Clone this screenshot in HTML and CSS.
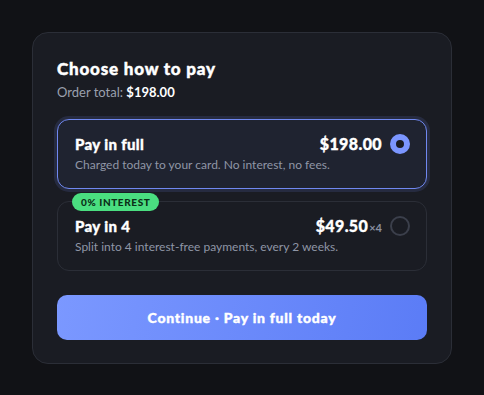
FILE: index.html
```html
<!DOCTYPE html>
<html>
<head>
<meta charset="utf-8">
<link rel="stylesheet" href="styles.css">
</head>
<body>
<div class="card">
  <h1 class="title">Choose how to pay</h1>
  <p class="total">Order total: <strong>$198.00</strong></p>
  <div class="options">
    <div class="option selected">
      <div class="opt-row">
        <span class="opt-name">Pay in full</span>
        <span class="opt-right">
          <span class="opt-price">$198.00</span>
          <span class="radio on"></span>
        </span>
      </div>
      <div class="opt-desc">Charged today to your card. No interest, no fees.</div>
    </div>
    <div class="option">
      <span class="badge">0% INTEREST</span>
      <div class="opt-row">
        <span class="opt-name">Pay in 4</span>
        <span class="opt-right">
          <span class="opt-price">$49.50<span class="times">×4</span></span>
          <span class="radio"></span>
        </span>
      </div>
      <div class="opt-desc">Split into 4 interest-free payments, every 2 weeks.</div>
    </div>
  </div>
  <button class="cta">Continue · Pay in full today</button>
</div>
</body>
</html>
```
FILE: styles.css
```css
* { box-sizing: border-box; }
html, body { margin: 0; padding: 0; }
body {
  background: #111216;
  font-family: Lato, "Noto Sans", sans-serif;
  color: #e8eaf0;
  padding: 32px;
  width: 484px;
  height: 395px;
}
.card {
  width: 420px;
  background: #1a1c23;
  border: 1px solid #2b2e37;
  border-radius: 16px;
  padding: 24px 24px 23px;
}
.title {
  margin: 0;
  font-size: 17px;
  font-weight: 900;
  color: #ffffff;
  line-height: 24px;
  letter-spacing: 0.8px;
  -webkit-text-stroke: 0.45px #ffffff;
}
.total {
  margin: 2px 0 0;
  font-size: 13px;
  color: #9aa0ae;
  line-height: 18px;
}
.total strong { color: #ffffff; font-weight: 700; }
.options {
  margin-top: 18px;
  display: flex;
  flex-direction: column;
  gap: 12px;
}
.option {
  position: relative;
  display: flex;
  flex-direction: column;
  justify-content: center;
  height: 70px;
  padding: 0 16px 2px 17px;
  border: 1px solid #2b2e37;
  border-radius: 12px;
}
.option.selected {
  border-color: #7088f0;
  background: #1f2330;
  box-shadow: 0 0 0 3px rgba(112, 136, 240, 0.14);
}
.opt-row {
  display: flex;
  justify-content: space-between;
  align-items: center;
  height: 20px;
}
.opt-right {
  display: flex;
  align-items: center;
  gap: 8px;
}
.opt-name {
  font-size: 15px;
  font-weight: 900;
  color: #ffffff;
  letter-spacing: 0.35px;
  -webkit-text-stroke: 0.35px #ffffff;
}
.opt-price {
  font-size: 16px;
  font-weight: 900;
  color: #ffffff;
  letter-spacing: 0.4px;
  -webkit-text-stroke: 0.35px #ffffff;
}
.times {
  font-size: 11px;
  font-weight: 700;
  color: #8a90a0;
  margin-left: 1px;
  letter-spacing: 0;
  -webkit-text-stroke: 0;
}
.opt-desc {
  margin-top: 3px;
  font-size: 12px;
  color: #8f96a6;
  line-height: 16px;
}
.radio {
  width: 20px;
  height: 20px;
  border-radius: 50%;
  border: 2px solid #3b3f4b;
  flex: none;
}
.radio.on {
  border: 6px solid #7b96ff;
  background: #1a1c23;
}
.badge {
  position: absolute;
  top: -9px;
  left: 14px;
  background: #4ade80;
  color: #0b2e17;
  font-size: 10px;
  font-weight: 900;
  letter-spacing: 0.6px;
  padding: 2px 9px;
  border-radius: 9px;
  line-height: 14px;
}
.cta {
  margin-top: 24px;
  width: 100%;
  height: 45px;
  border: 0;
  border-radius: 10px;
  background: linear-gradient(100deg, #7b98ff, #5b7cf6);
  color: #ffffff;
  font-family: inherit;
  font-size: 14px;
  font-weight: 900;
  letter-spacing: 0.75px;
  -webkit-text-stroke: 0.4px #ffffff;
}
```
